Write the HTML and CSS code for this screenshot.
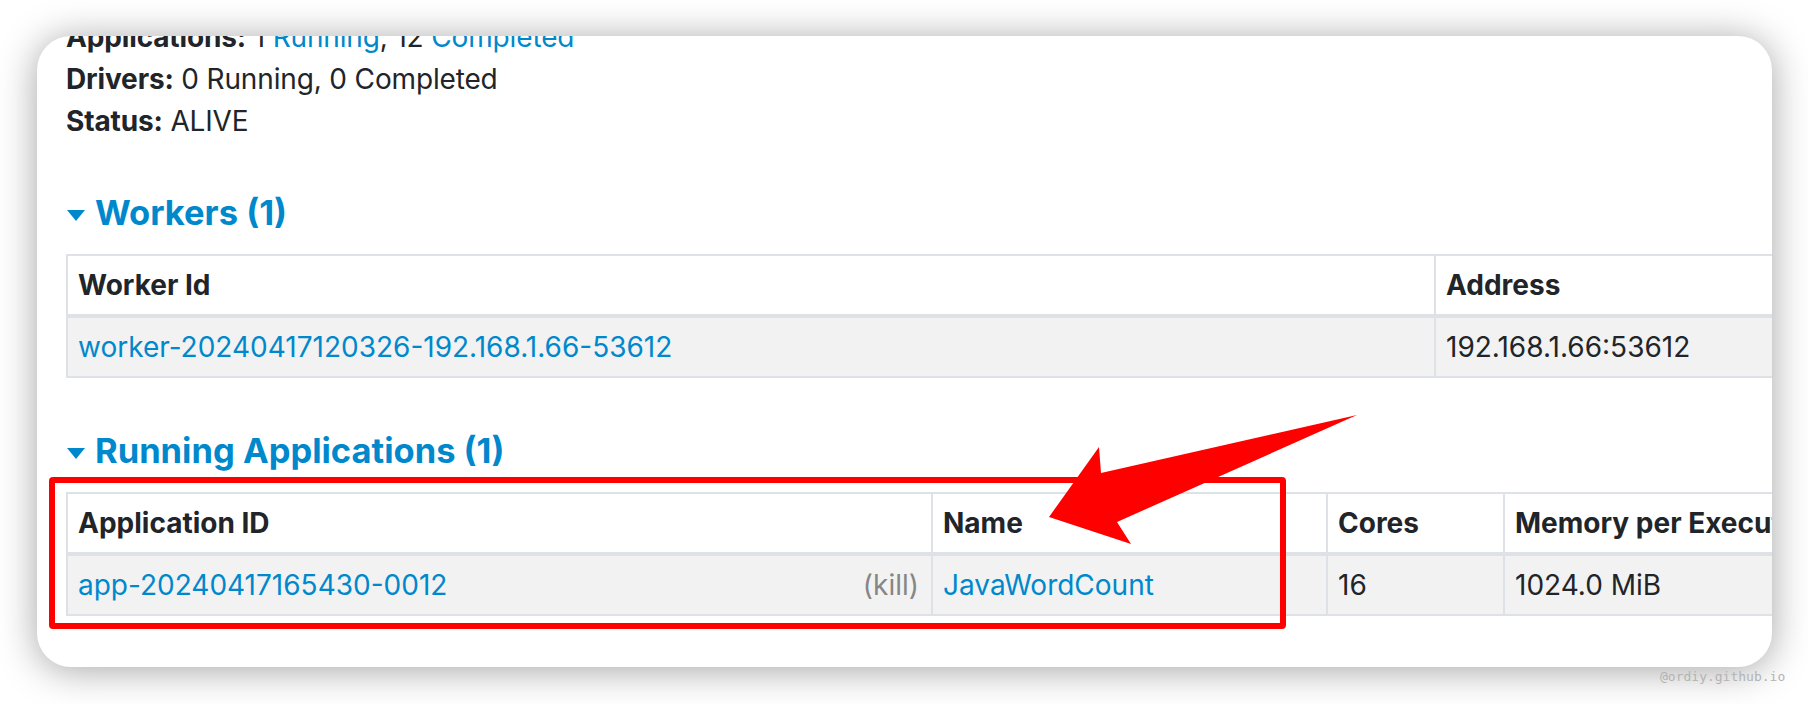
FILE: index.html
```html
<!DOCTYPE html>
<html>
<head>
<meta charset="utf-8">
<link rel="stylesheet" href="styles.css">
</head>
<body>
<div class="card">
  <div class="content">
    <ul class="summary">
      <li><strong>Applications:</strong> 1 <a href="#running-app">Running</a>, 12 <a href="#completed-app">Completed</a></li>
      <li><strong>Drivers:</strong> 0 Running, 0 Completed</li>
      <li><strong>Status:</strong> ALIVE</li>
    </ul>

    <h4 class="section-title"><span class="arrow-open"></span><a href="#workers">Workers (1)</a></h4>
    <table class="data-table">
      <colgroup><col class="w-worker"><col class="w-address"><col class="w-rest"></colgroup>
      <thead>
        <tr><th>Worker Id</th><th>Address</th><th>State</th></tr>
      </thead>
      <tbody>
        <tr><td><a href="#w">worker-20240417120326-192.168.1.66-53612</a></td><td>192.168.1.66:53612</td><td>ALIVE</td></tr>
      </tbody>
    </table>

    <h4 class="section-title second"><span class="arrow-open"></span><a href="#running-app">Running Applications (1)</a></h4>
    <table class="data-table">
      <colgroup><col class="w-appid"><col class="w-name"><col class="w-cores"><col class="w-mem"></colgroup>
      <thead>
        <tr><th>Application ID</th><th>Name</th><th>Cores</th><th>Memory per Executor</th></tr>
      </thead>
      <tbody>
        <tr><td><a class="kill-link" href="#kill">(kill)</a><a href="#app">app-20240417165430-0012</a></td><td><a href="#app">JavaWordCount</a></td><td>16</td><td>1024.0 MiB</td></tr>
      </tbody>
    </table>
  </div>
  <div class="highlight-box"></div>
</div>

<svg class="annotation-arrow" width="1808" height="704" viewBox="0 0 1808 704" xmlns="http://www.w3.org/2000/svg">
  <polygon points="1357,415 1101,473 1099,447 1049,517 1131,544 1117,522" fill="#ff0000"/>
</svg>

<div class="watermark">@ordiy.github.io</div>
</body>
</html>
```

FILE: styles.css
```css
html, body {
  margin: 0;
  padding: 0;
}

body {
  position: relative;
  width: 1808px;
  height: 704px;
  overflow: hidden;
  background: #ffffff;
  box-sizing: border-box;
  padding: 36px 0 0 37px;
  font-family: "Inter", "Noto Sans", sans-serif;
  color: #212529;
}

a {
  color: #0088cc;
  text-decoration: none;
}

.card {
  position: relative;
  width: 1735px;
  height: 631px;
  background: #ffffff;
  border-radius: 34px;
  box-shadow: 0 3px 38px rgba(0, 0, 0, 0.36);
  overflow: hidden;
}

.content {
  margin-top: -20px;
  padding-left: 29px;
}

.summary {
  list-style: none;
  margin: 0;
  padding: 0;
  font-size: 28px;
  line-height: 42px;
  letter-spacing: -0.15px;
}

.summary strong {
  font-weight: 700;
}

.section-title {
  display: flex;
  align-items: center;
  gap: 10px;
  margin: 51px 0 21px 1px;
  font-size: 34.5px;
  line-height: 40px;
  font-weight: 700;
  white-space: nowrap;
}

.section-title.second {
  margin-top: 53px;
}

.arrow-open {
  width: 0;
  height: 0;
  margin-top: 5px;
  border-left: 9.5px solid transparent;
  border-right: 9.5px solid transparent;
  border-top: 11px solid #0088cc;
}

.data-table {
  border-collapse: separate;
  border-spacing: 0;
  table-layout: fixed;
  width: 2600px;
  border-top: 2px solid #dee2e6;
  border-left: 2px solid #dee2e6;
  font-size: 28px;
  line-height: 42px;
}

.data-table th,
.data-table td {
  box-sizing: border-box;
  padding: 8px 12px 8px 10px;
  text-align: left;
  white-space: nowrap;
  overflow: hidden;
  border-right: 2px solid #dee2e6;
  border-bottom: 2px solid #dee2e6;
}

.data-table th {
  font-weight: 700;
  background: #ffffff;
  border-bottom-width: 4px;
}

.data-table td {
  background: #f2f2f2;
}

.w-worker { width: 1368px; }
.w-address { width: 500px; }
.w-rest { width: 730px; }

.w-appid { width: 865px; }
.w-name { width: 395px; }
.w-cores { width: 177px; }
.w-mem { width: 1161px; }

.kill-link {
  float: right;
  color: #868686;
}

.highlight-box {
  position: absolute;
  left: 12px;
  top: 441px;
  width: 1237px;
  height: 152px;
  box-sizing: border-box;
  border: 6px solid #ff0000;
  border-radius: 4px;
  pointer-events: none;
}

.annotation-arrow {
  position: absolute;
  left: 0;
  top: 0;
  pointer-events: none;
}

.watermark {
  position: absolute;
  left: 1660px;
  top: 668px;
  font-family: "DejaVu Sans Mono", monospace;
  font-size: 13px;
  line-height: 18px;
  color: #b3b3b3;
}
```
